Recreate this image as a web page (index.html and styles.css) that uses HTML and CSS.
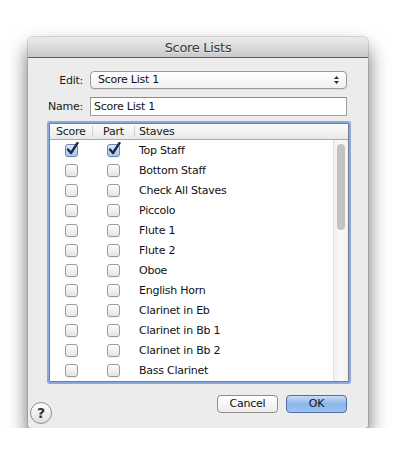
FILE: index.html
```html
<!DOCTYPE html>
<html>
<head>
<meta charset="utf-8">
<link rel="stylesheet" href="styles.css">
</head>
<body>
<div class="stage">
  <div class="window">
    <div class="titlebar">Score Lists</div>
    <div class="content">
      <div class="form">
        <label class="lbl">Edit:</label>
        <div class="popup">
          <span>Score List 1</span>
          <svg class="arrows" width="7" height="10" viewBox="0 0 7 10"><path d="M3.5 1 L6 4 H1 Z M3.5 9 L6 6 H1 Z" fill="#333"/></svg>
        </div>
        <label class="lbl">Name:</label>
        <div class="field">Score List 1</div>
      </div>
      <div class="table">
        <div class="thead">
          <div class="th c-score">Score</div>
          <div class="th c-part">Part</div>
          <div class="th c-staves">Staves</div>
        </div>
        <div class="tbody">
          <div class="rows">
            <div class="row"><span class="cell c-score"><span class="cb on"><svg viewBox="0 0 14 14" width="14" height="14"><path d="M3 7.5 L6 11 L12.5 1" fill="none" stroke="#1c2a4a" stroke-width="2.4" stroke-linecap="round" stroke-linejoin="round"/></svg></span></span><span class="cell c-part"><span class="cb on"><svg viewBox="0 0 14 14" width="14" height="14"><path d="M3 7.5 L6 11 L12.5 1" fill="none" stroke="#1c2a4a" stroke-width="2.4" stroke-linecap="round" stroke-linejoin="round"/></svg></span></span><span class="cell c-staves">Top Staff</span></div>
            <div class="row"><span class="cell c-score"><span class="cb"></span></span><span class="cell c-part"><span class="cb"></span></span><span class="cell c-staves">Bottom Staff</span></div>
            <div class="row"><span class="cell c-score"><span class="cb"></span></span><span class="cell c-part"><span class="cb"></span></span><span class="cell c-staves">Check All Staves</span></div>
            <div class="row"><span class="cell c-score"><span class="cb"></span></span><span class="cell c-part"><span class="cb"></span></span><span class="cell c-staves">Piccolo</span></div>
            <div class="row"><span class="cell c-score"><span class="cb"></span></span><span class="cell c-part"><span class="cb"></span></span><span class="cell c-staves">Flute 1</span></div>
            <div class="row"><span class="cell c-score"><span class="cb"></span></span><span class="cell c-part"><span class="cb"></span></span><span class="cell c-staves">Flute 2</span></div>
            <div class="row"><span class="cell c-score"><span class="cb"></span></span><span class="cell c-part"><span class="cb"></span></span><span class="cell c-staves">Oboe</span></div>
            <div class="row"><span class="cell c-score"><span class="cb"></span></span><span class="cell c-part"><span class="cb"></span></span><span class="cell c-staves">English Horn</span></div>
            <div class="row"><span class="cell c-score"><span class="cb"></span></span><span class="cell c-part"><span class="cb"></span></span><span class="cell c-staves">Clarinet in Eb</span></div>
            <div class="row"><span class="cell c-score"><span class="cb"></span></span><span class="cell c-part"><span class="cb"></span></span><span class="cell c-staves">Clarinet in Bb 1</span></div>
            <div class="row"><span class="cell c-score"><span class="cb"></span></span><span class="cell c-part"><span class="cb"></span></span><span class="cell c-staves">Clarinet in Bb 2</span></div>
            <div class="row"><span class="cell c-score"><span class="cb"></span></span><span class="cell c-part"><span class="cb"></span></span><span class="cell c-staves">Bass Clarinet</span></div>
          </div>
          <div class="scrollbar"><div class="thumb"></div></div>
        </div>
      </div>
      <div class="footer">
        <div class="help">?</div>
        <div class="buttons">
          <div class="btn">Cancel</div>
          <div class="btn primary">OK</div>
        </div>
      </div>
    </div>
  </div>
</div>
</body>
</html>
```

FILE: styles.css
```css
html, body {
  margin: 0;
  padding: 0;
  background: #ffffff;
}
body {
  font-family: "DejaVu Sans", "Liberation Sans", sans-serif;
  font-size: 11px;
  letter-spacing: -0.25px;
  color: #111;
}
.stage {
  padding: 37px 0 0 28px;
}
.window {
  width: 340px;
  height: 391px;
  background: #ececec;
  border-radius: 5px 5px 3px 3px;
  box-shadow: 0 11px 20px rgba(0,0,0,0.6), 0 0 0 1px rgba(0,0,0,0.12);
  display: flex;
  flex-direction: column;
  overflow: hidden;
}
.titlebar {
  height: 20px;
  line-height: 21px;
  text-align: center;
  font-size: 13px;
  letter-spacing: -0.3px;
  color: #3a3a3a;
  background: linear-gradient(#ebebeb, #c9c9c9);
  border-bottom: 1px solid #5a5a5a;
  text-shadow: 0 1px 0 rgba(255,255,255,0.5);
}
.content {
  flex: 1;
  display: flex;
  flex-direction: column;
  padding: 13px 19px 0 19px;
}
.form {
  display: grid;
  grid-template-columns: 36px 257px;
  column-gap: 7px;
  row-gap: 8px;
  align-items: center;
}
.lbl {
  text-align: right;
  white-space: nowrap;
  color: #1a1a1a;
}
.popup {
  height: 16px;
  border: 1px solid #9a9a9a;
  border-radius: 4px;
  background: linear-gradient(#ffffff, #f0f0f0);
  box-shadow: 0 1px 0 rgba(0,0,0,0.08);
  display: flex;
  align-items: center;
  justify-content: space-between;
  padding: 0 6px 0 7px;
}
.popup span { line-height: 16px; }
.field {
  height: 17px;
  line-height: 17px;
  border: 1px solid #9e9e9e;
  border-top-color: #8a8a8a;
  background: #fff;
  padding: 0 3px;
}
.table {
  margin-top: 7px;
  width: 298px;
  height: 257px;
  margin-left: 2px;
  border: 1px solid #7d7d7d;
  box-shadow: 0 0 0 2px #86aae0;
  border-radius: 1px;
  background: #fff;
  display: flex;
  flex-direction: column;
}
.thead {
  height: 15px;
  display: flex;
  background: linear-gradient(#fbfbfb, #e9e9e9);
  border-bottom: 1px solid #aaaaaa;
}
.th {
  line-height: 15px;
  color: #1a1a1a;
}
.th.c-score, .th.c-part {
  border-right: 1px solid #cfcfcf;
  height: 11px;
  margin-top: 2px;
  line-height: 11px;
}
.c-score { width: 43px; padding-left: 6px; box-sizing: border-box; }
.c-part { width: 42px; padding-left: 10px; box-sizing: border-box; }
.c-staves { padding-left: 4px; }
.th.c-staves { flex: 1; }
.tbody {
  flex: 1;
  display: flex;
  overflow: hidden;
}
.rows {
  flex: 1;
}
.row {
  height: 20px;
  display: flex;
  align-items: center;
}
.cell.c-score, .cell.c-part {
  display: flex;
  align-items: center;
}
.cell.c-score { padding-left: 15px; }
.cell.c-part { padding-left: 14px; }
.cell.c-staves { padding-left: 4px; color: #111; }
.cb {
  position: relative;
  width: 11px;
  height: 11px;
  border: 1px solid #9a9a9a;
  border-radius: 3px;
  background: linear-gradient(#fdfdfd, #e4e4e4);
  box-shadow: 0 1px 0 rgba(0,0,0,0.06);
}
.cb.on {
  background: linear-gradient(#dbe8fb, #a9c6f0);
  border-color: #6d86ad;
}
.cb svg {
  position: absolute;
  left: -1px;
  top: -3px;
}
.scrollbar {
  width: 15px;
  border-left: 1px solid #e2e2e2;
  background: linear-gradient(90deg, #f0f0f0, #fafafa 50%, #f0f0f0);
  padding-top: 4px;
  box-sizing: border-box;
}
.thumb {
  width: 8px;
  height: 86px;
  margin-left: 3px;
  border-radius: 4px;
  background: #c2c2c2;
}
.footer {
  display: flex;
  align-items: flex-start;
  justify-content: space-between;
  margin-top: 13px;
  margin-left: -17px;
  margin-right: 2px;
}
.help {
  width: 20px;
  height: 20px;
  margin-top: 7px;
  border: 1px solid #8c8c8c;
  border-radius: 50%;
  background: linear-gradient(#ffffff, #e0e0e0);
  text-align: center;
  line-height: 20px;
  font-size: 14px;
  font-weight: bold;
  letter-spacing: 0;
  color: #333;
}
.buttons {
  display: flex;
  gap: 8px;
}
.btn {
  width: 59px;
  height: 16px;
  line-height: 16px;
  text-align: center;
  border: 1px solid #8e8e8e;
  border-radius: 4px;
  background: linear-gradient(#ffffff, #ededed);
  color: #111;
}
.btn.primary {
  border-color: #4f6f9e;
  background: linear-gradient(#c9dcf7, #8bb5ec 50%, #9dc3f2);
}
```
